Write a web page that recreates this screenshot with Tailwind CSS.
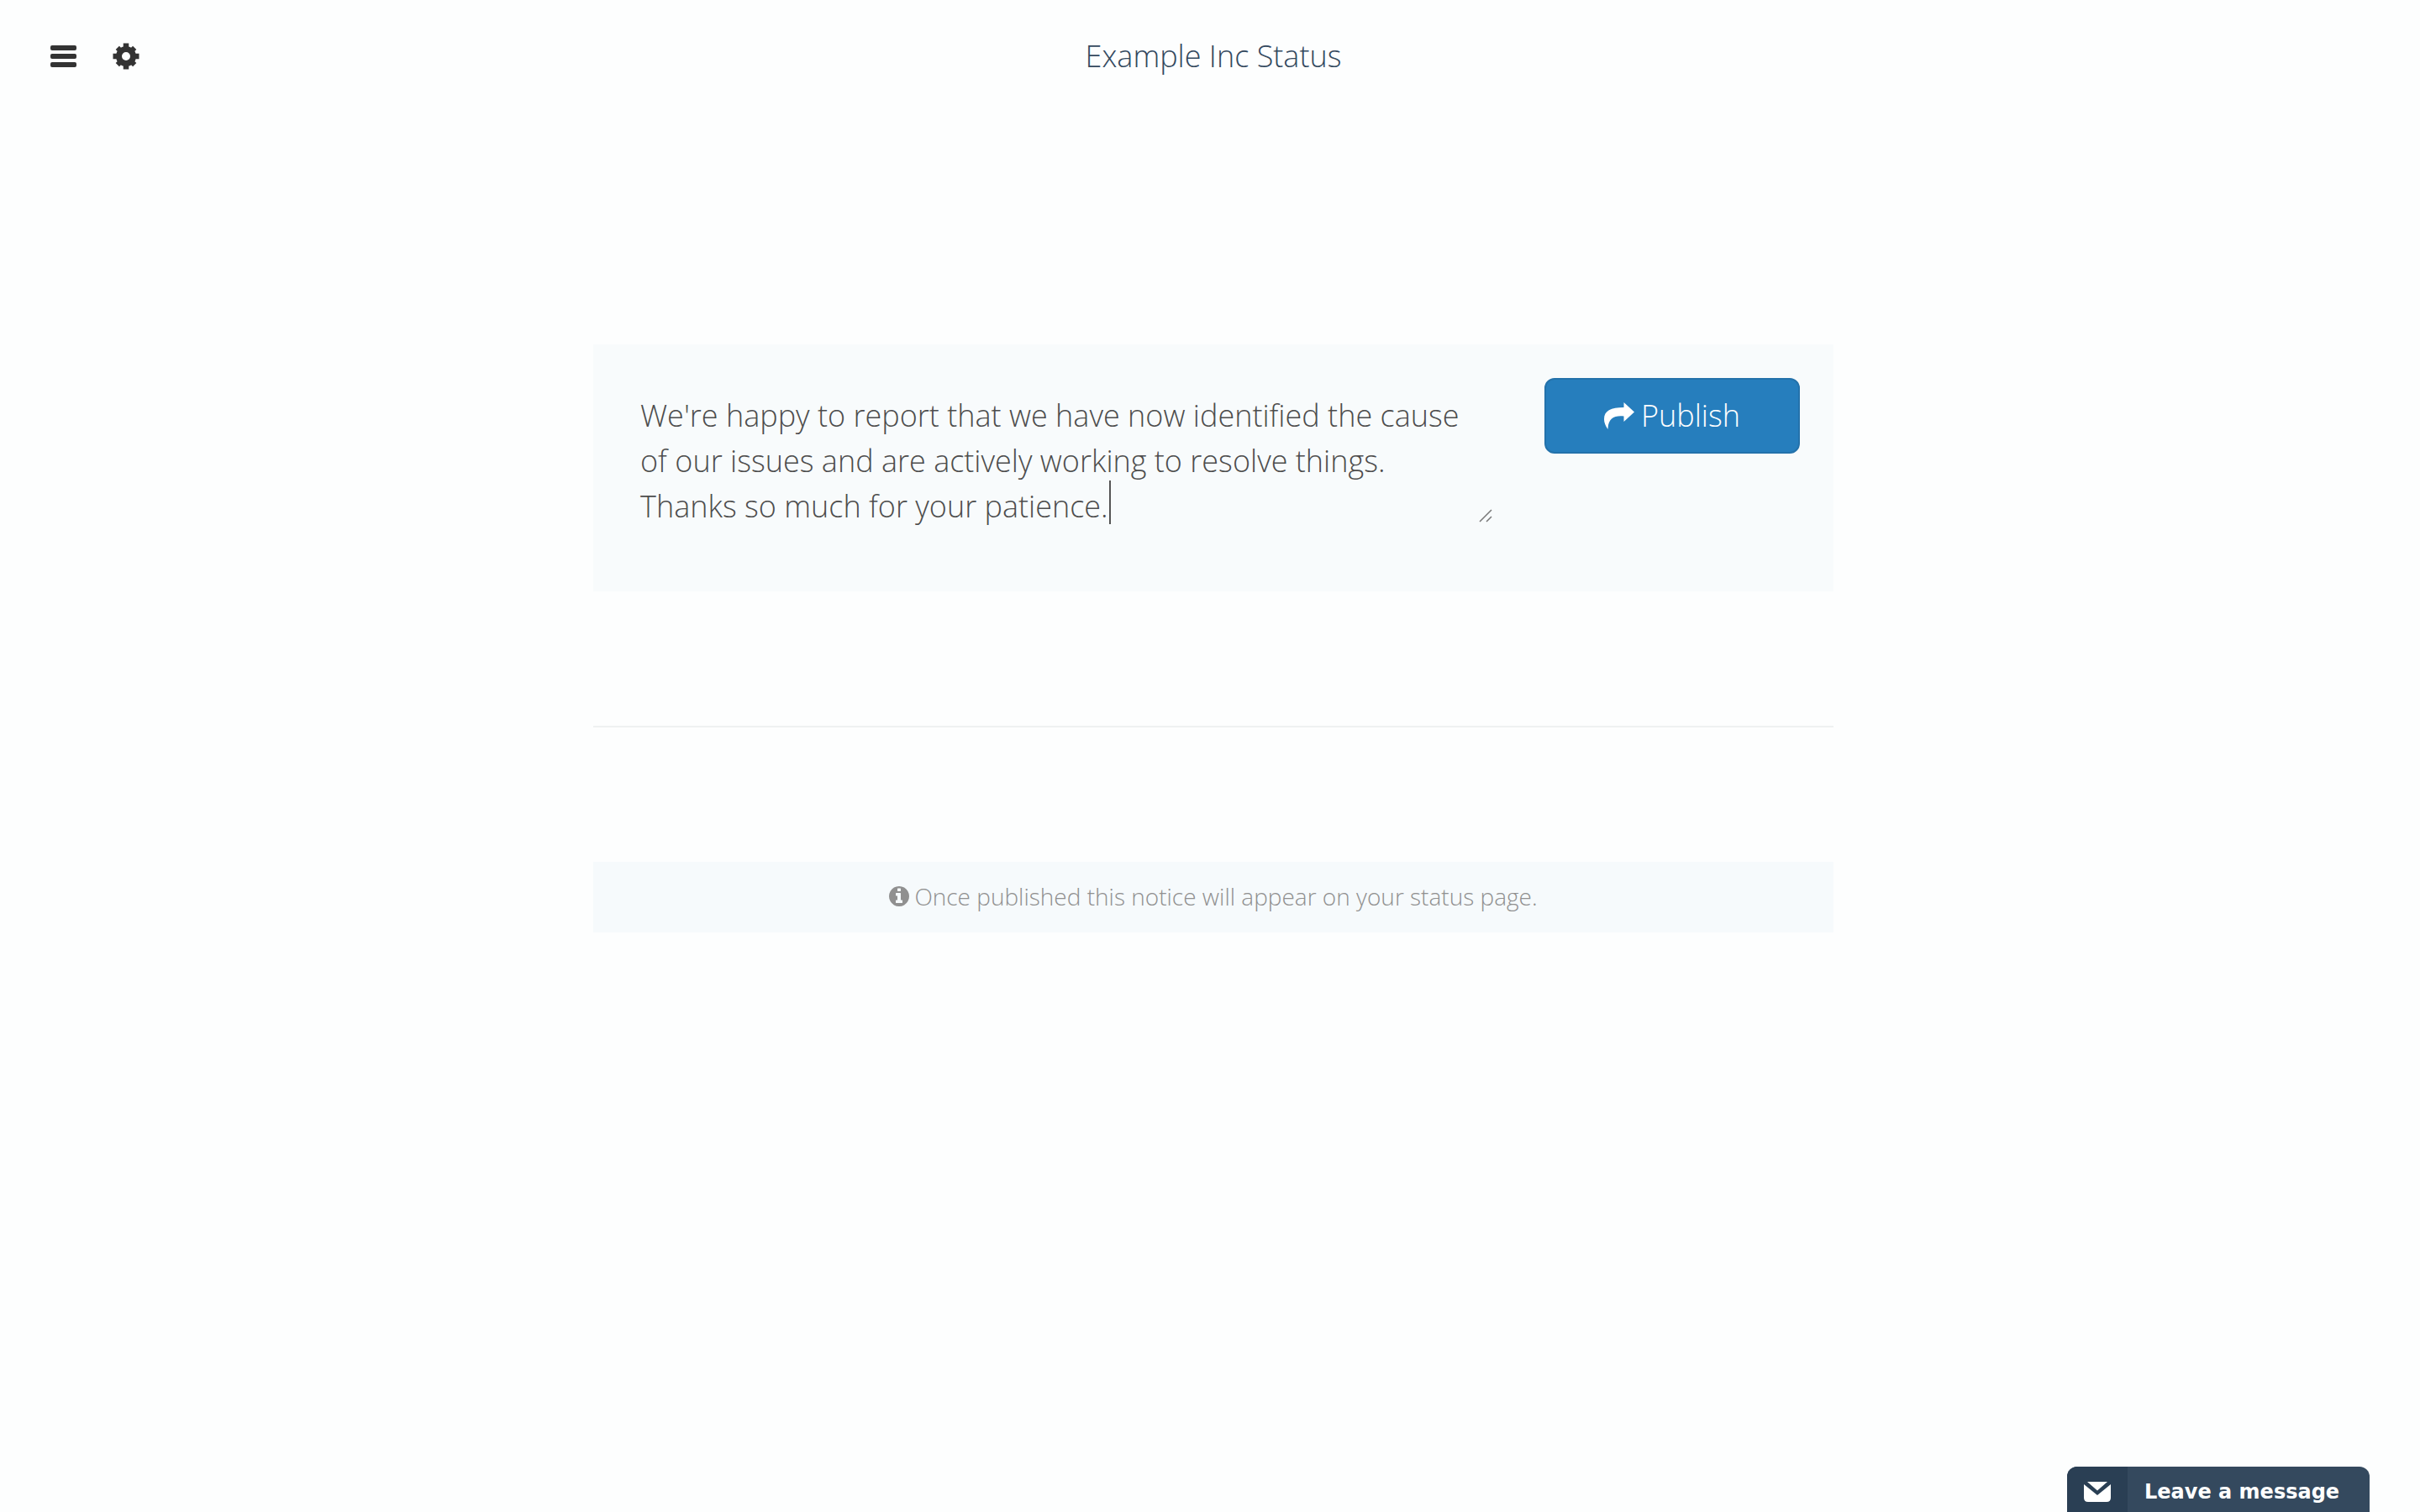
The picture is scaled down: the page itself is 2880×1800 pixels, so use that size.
<!DOCTYPE html>
<html lang="en">
<head>
<meta charset="utf-8">
<meta name="viewport" content="width=device-width, initial-scale=1">
<title>Example Inc Status</title>
<script src="https://cdn.jsdelivr.net/npm/@tailwindcss/browser@4"></script>
</head>
<body class="flex min-h-screen flex-col bg-[#fdfefe] pl-2 font-['Open_Sans',sans-serif] font-light">
  <header class="grid grid-cols-[1fr_auto_1fr] items-center px-13 pt-10">
    <nav class="flex items-center gap-[42px] text-[#333]">
      <button type="button" aria-label="Menu" class="block">
        <svg class="block size-8" viewBox="0 0 32 32" fill="currentColor"><rect x="0" y="3" width="31" height="6" rx="2"/><rect x="0" y="13" width="31" height="6" rx="2"/><rect x="0" y="23" width="31" height="6" rx="2"/></svg>
      </button>
      <button type="button" aria-label="Settings" class="block">
        <svg class="block size-8" viewBox="0 0 32 32" fill="none" stroke="currentColor"><circle cx="16" cy="16" r="8.500" stroke-width="7"/><path d="M16 .5V9M16 23V31.500M.5 16H9M23 16H31.500" stroke-width="6.500"/><path d="M5.800 5.800L10 10M22 22L26.200 26.200M5.800 26.200L10 22M22 10L26.200 5.800" stroke-width="6"/></svg>
      </button>
    </nav>
    <h1 class="text-4xl leading-[54px] text-[#34495e]">Example Inc Status</h1>
  </header>

  <main class="mx-auto flex w-full max-w-[1476px] flex-col pt-[316px]">
    <form class="flex items-start justify-between bg-[#f8fbfc] px-10 pt-10 pb-[70px]">
      <div class="relative w-[1034px]">
        <textarea aria-label="Notice" rows="3" class="block h-[184px] w-full resize-none overflow-hidden bg-transparent px-4 pt-[18px] text-4xl leading-[54px] text-[#4d4d4d] outline-none">We're happy to report that we have now identified the cause of our issues and are actively working to resolve things. Thanks so much for your patience.</textarea>
        <span class="absolute top-[122px] left-[574px] h-[52px] w-0.5 bg-[#555]"></span>
        <svg class="absolute right-1 bottom-3 size-4" viewBox="0 0 16 16" fill="none" stroke="#777" stroke-width="1.500"><path d="M1 15L15 1M9 15L15 9"/></svg>
      </div>
      <button type="submit" class="flex h-[90px] w-[304px] items-center justify-center gap-2 rounded-xl border-2 border-[#2472ab] bg-[#267ebd] text-4xl text-white">
        <svg class="block h-8 w-9" viewBox="0 0 36 32" fill="currentColor"><path d="M23.500 0L36 11.500L23.500 23V16.500C12 15.500 5 18.500 4.500 32C2 28.500 0 24.500 0 20C0 10 8 6 23.500 6Z"/></svg>
        Publish
      </button>
    </form>
    <hr class="my-40 border-t-2 border-[#eff1f1]">
    <p class="flex h-[84px] items-center justify-center gap-1.5 bg-[#f6fafc] pb-0.5 text-[28px] text-[#909090]">
      <svg class="block size-6" viewBox="0 0 1536 1536" fill="currentColor"><path d="M1024 1248v-160q0-14-9-23t-23-9h-96V544q0-14-9-23t-23-9H544q-14 0-23 9t-9 23v160q0 14 9 23t23 9h96v320h-96q-14 0-23 9t-9 23v160q0 14 9 23t23 9h448q14 0 23-9t9-23zM896 352V192q0-14-9-23t-23-9H672q-14 0-23 9t-9 23v160q0 14 9 23t23 9h192q14 0 23-9t9-23zm640 416q0 209-103 385.500T1153.500 1433 768 1536t-385.500-103T103 1153.500 0 768t103-385.500T382.500 103 768 0t385.500 103T1433 382.500 1536 768z"/></svg>
      Once published this notice will appear on your status page.
    </p>
  </main>

  <button type="button" class="mt-auto mr-15 flex h-[54px] w-[360px] self-end overflow-hidden rounded-t-xl bg-[#34495e] text-left font-['DejaVu_Sans',sans-serif] text-2xl font-bold text-white">
    <span class="flex h-full w-18 items-center justify-center bg-[#2a3f54] pt-1.5">
      <svg class="block h-6 w-8" viewBox="0 0 32 24" fill="currentColor"><path d="M4 0H28L16 10.500z"/><path d="M0 3L16 16 32 3V19q0 5-5 5H5q-5 0-5-5z"/></svg>
    </span>
    <span class="flex h-full items-center pt-1.5 pl-5">Leave a message</span>
  </button>
</body>
</html>
